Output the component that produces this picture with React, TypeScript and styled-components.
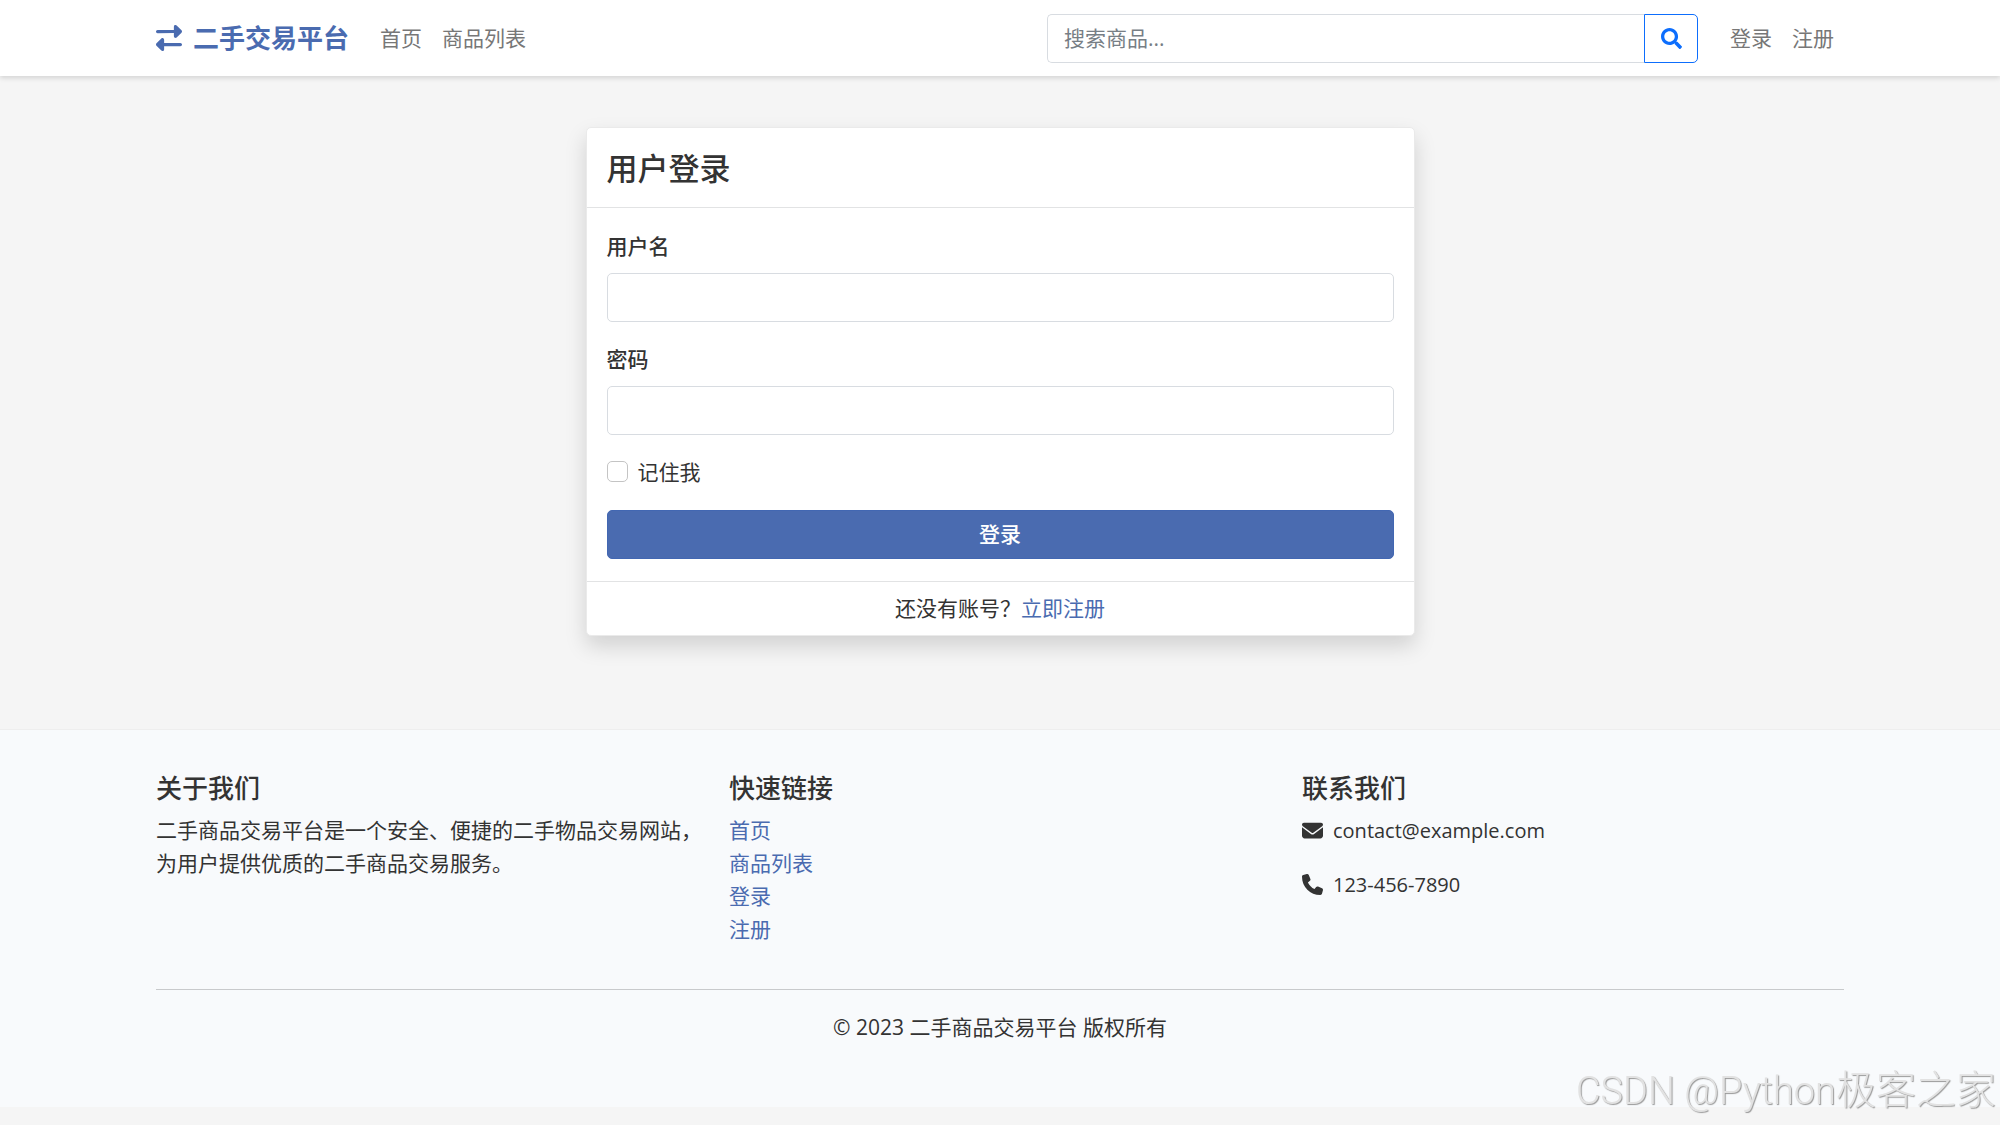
import React from "react";
import styled, { createGlobalStyle } from "styled-components";
import { FaSearch } from "react-icons/fa";
import { FaEnvelope, FaPhone, FaRightLeft } from "react-icons/fa6";

const GlobalStyle = createGlobalStyle`
  *, *::before, *::after { box-sizing: border-box; }
  body {
    margin: 0;
    background: #f5f5f5;
    color: #333;
    font-family: "Open Sans", "Noto Sans CJK SC", sans-serif;
    font-size: 21px;
    line-height: 33px;
  }
  button, input { font: inherit; }
  p, h2, h3, ul { margin: 0; padding: 0; }
`;

const Container = styled.div`
  width: min(100% - 48px, 1688px);
  margin: 0 auto;
`;

const Header = styled.header`
  position: relative;
  background: #fff;
  box-shadow: 0 2px 5px rgba(0, 0, 0, 0.14);
`;

const Bar = styled(Container)`
  display: flex;
  align-items: center;
  min-height: 76px;
`;

const Link = styled.a`
  color: #4a6bb0;
  text-decoration: none;
`;

const Brand = styled(Link)`
  display: flex;
  align-items: center;
  gap: 11px;
  margin-right: 21px;
  font-size: 26px;
  font-weight: 700;
  white-space: nowrap;
`;

const Nav = styled.nav`
  display: flex;
  white-space: nowrap;
`;

const NavLink = styled.a`
  padding: 0 10px;
  color: #777;
  text-decoration: none;
`;

const Search = styled.form`
  display: flex;
  flex: 0 1 651px;
  min-width: 0;
  margin: 0 22px 0 auto;
`;

const TextInput = styled.input`
  display: block;
  width: 100%;
  min-width: 0;
  height: 49px;
  padding: 0 16px;
  border: 1px solid #d8dce1;
  border-radius: 5px;
  background: #fff;
  color: #333;
  outline-color: #4a6bb0;
  &::placeholder { color: #777e85; opacity: 1; }
`;

const SearchInput = styled(TextInput)`
  border-right: 0;
  border-radius: 5px 0 0 5px;
`;

const SearchButton = styled.button`
  display: flex;
  flex: none;
  align-items: center;
  justify-content: center;
  width: 54px;
  border: 1px solid #0d6efd;
  border-radius: 0 5px 5px 0;
  background: #fff;
  color: #0d6efd;
  cursor: pointer;
`;

const Main = styled.main`
  padding: 51px 24px 93px;
`;

const Card = styled.section`
  max-width: 829px;
  margin: 0 auto;
  border: 1px solid #eaeaea;
  border-radius: 5px;
  background: #fff;
  box-shadow: 0 10px 21px rgba(0, 0, 0, 0.15);
`;

const CardHeader = styled.div`
  padding: 21px 20px 20px;
  border-bottom: 1px solid #e2e3e4;
`;

const CardTitle = styled.h2`
  font-size: 31px;
  font-weight: 500;
  line-height: 38px;
`;

const LoginForm = styled.form`
  display: grid;
  gap: 21px;
  padding: 22px 20px;
`;

const Field = styled.div`
  display: grid;
  gap: 10px;
`;

const Label = styled.label`
  font-weight: 500;
`;

const CheckRow = styled.label`
  display: flex;
  align-items: flex-start;
  gap: 10px;
`;

const Checkbox = styled.input`
  appearance: none;
  width: 21px;
  height: 21px;
  margin: 5px 0 0;
  border: 1px solid #c4c4c4;
  border-radius: 5px;
  background: #fff;
  &:checked { background: #4a6bb0; border-color: #4a6bb0; }
`;

const Submit = styled.button`
  height: 49px;
  padding: 0;
  border: 1px solid #4267b2;
  border-radius: 5px;
  background: #4a6bb0;
  color: #fff;
  font-weight: 500;
  cursor: pointer;
`;

const CardFooter = styled.div`
  padding: 10px 20px;
  border-top: 1px solid #e2e3e4;
  text-align: center;
`;

const Footer = styled.footer`
  padding: 43px 0 42px;
  border-top: 1px solid #eee;
  background: #f8fafc;
`;

const Columns = styled.div`
  display: grid;
  grid-template-columns: repeat(3, 1fr);
  margin-right: -31px;
`;

const Column = styled.section`
  padding-right: 24px;
`;

const ColumnTitle = styled.h3`
  margin-bottom: 10px;
  font-size: 26px;
  font-weight: 500;
  line-height: 31px;
`;

const LinkList = styled.ul`
  list-style: none;
`;

const Contact = styled.p`
  display: flex;
  align-items: center;
  gap: 10px;
  margin-bottom: 21px;
  font-size: 20px;
`;

const Copyright = styled.p`
  margin: 43px 0 21px;
  padding-top: 21px;
  border-top: 1px solid #c8cacc;
  text-align: center;
`;

const Watermark = styled.div`
  position: fixed;
  right: 4px;
  bottom: 10px;
  color: #e2e2e2;
  font-family: Roboto, "Noto Sans CJK SC", sans-serif;
  font-size: 40px;
  font-weight: 300;
  line-height: 48px;
  white-space: nowrap;
  text-shadow: 1px 1px 1px #999;
  pointer-events: none;
`;

const WatermarkLatin = styled.span`
  font-size: 38px;
`;

const quickLinks = ["首页", "商品列表", "登录", "注册"];

export default function App() {
  return (
    <>
      <GlobalStyle />
      <Header>
        <Bar>
          <Brand href="#">
            <FaRightLeft size={26} aria-hidden />
            二手交易平台
          </Brand>
          <Nav>
            <NavLink href="#">首页</NavLink>
            <NavLink href="#">商品列表</NavLink>
          </Nav>
          <Search onSubmit={(e) => e.preventDefault()}>
            <SearchInput type="search" placeholder="搜索商品..." aria-label="搜索商品" />
            <SearchButton type="submit" aria-label="搜索">
              <FaSearch size={21} aria-hidden />
            </SearchButton>
          </Search>
          <Nav>
            <NavLink href="#">登录</NavLink>
            <NavLink href="#">注册</NavLink>
          </Nav>
        </Bar>
      </Header>

      <Main>
        <Card>
          <CardHeader>
            <CardTitle>用户登录</CardTitle>
          </CardHeader>
          <LoginForm onSubmit={(e) => e.preventDefault()}>
            <Field>
              <Label htmlFor="username">用户名</Label>
              <TextInput id="username" type="text" autoComplete="username" />
            </Field>
            <Field>
              <Label htmlFor="password">密码</Label>
              <TextInput id="password" type="password" autoComplete="current-password" />
            </Field>
            <CheckRow htmlFor="remember">
              <Checkbox id="remember" type="checkbox" />
              记住我
            </CheckRow>
            <Submit type="submit">登录</Submit>
          </LoginForm>
          <CardFooter>
            还没有账号？<Link href="#">立即注册</Link>
          </CardFooter>
        </Card>
      </Main>

      <Footer>
        <Container>
          <Columns>
            <Column>
              <ColumnTitle>关于我们</ColumnTitle>
              <p>二手商品交易平台是一个安全、便捷的二手物品交易网站，为用户提供优质的二手商品交易服务。</p>
            </Column>
            <Column>
              <ColumnTitle>快速链接</ColumnTitle>
              <LinkList>
                {quickLinks.map((name) => (
                  <li key={name}>
                    <Link href="#">{name}</Link>
                  </li>
                ))}
              </LinkList>
            </Column>
            <Column>
              <ColumnTitle>联系我们</ColumnTitle>
              <Contact>
                <FaEnvelope size={21} aria-hidden />
                contact@example.com
              </Contact>
              <Contact>
                <FaPhone size={21} aria-hidden />
                123-456-7890
              </Contact>
            </Column>
          </Columns>
          <Copyright>© 2023 二手商品交易平台 版权所有</Copyright>
        </Container>
      </Footer>
      <Watermark>
        <WatermarkLatin>CSDN @Python</WatermarkLatin>极客之家
      </Watermark>
    </>
  );
}
